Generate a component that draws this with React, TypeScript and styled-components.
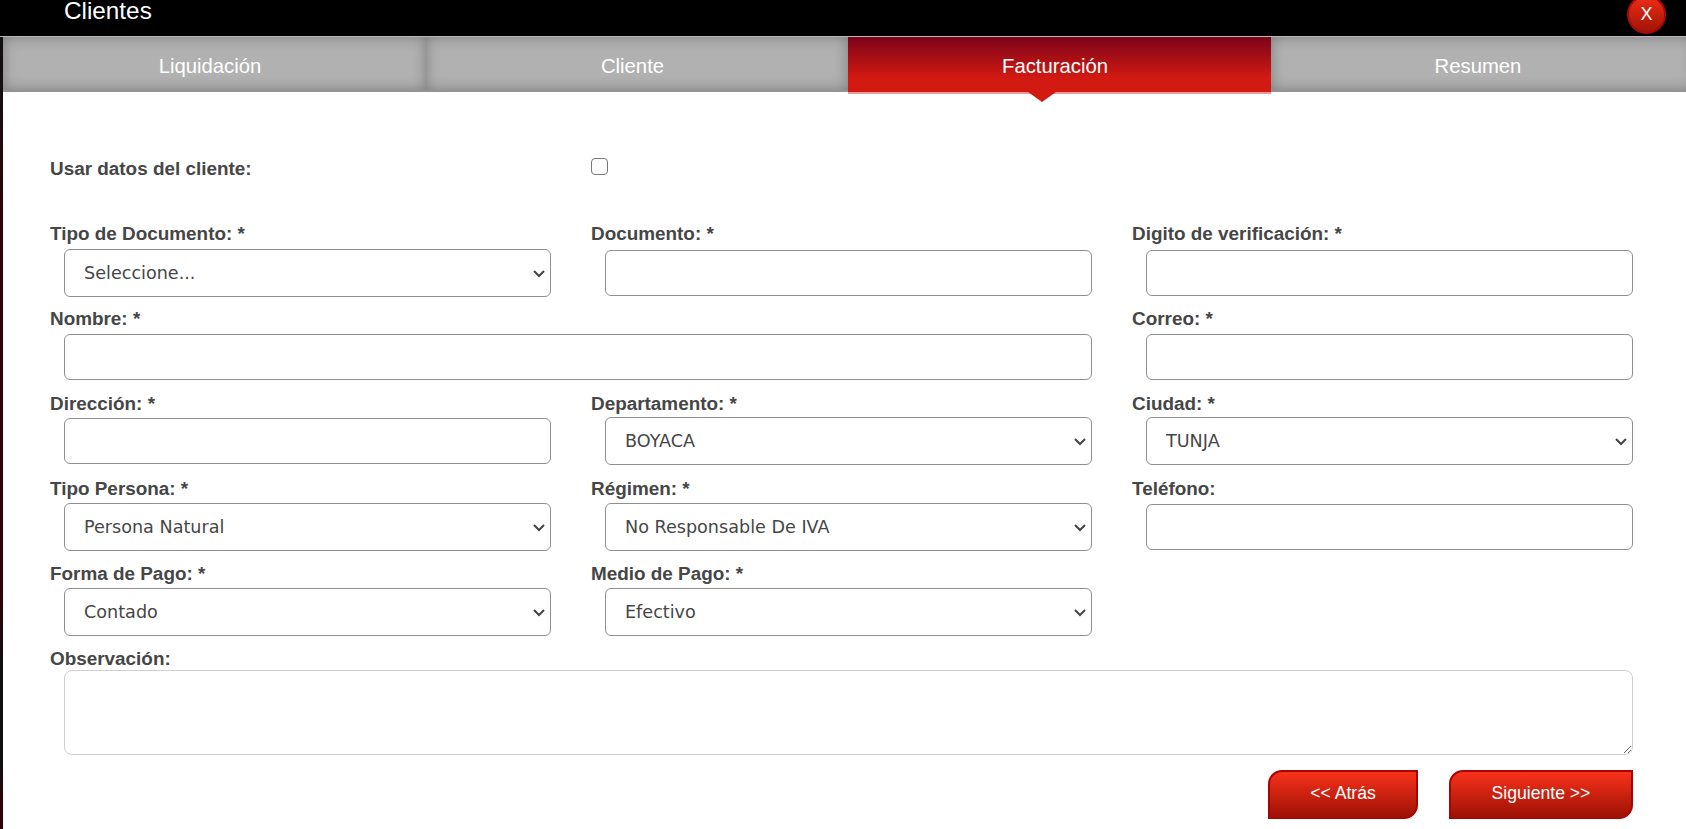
import React from 'react';
import styled, { createGlobalStyle } from 'styled-components';

const GlobalStyle = createGlobalStyle`
  html, body {
    margin: 0;
    height: 100%;
    overflow: hidden;
    background: linear-gradient(#141012 0, #141012 90px, #2c040a 200px, #2c040a 600px, #0e1010 660px, #0e1010 760px, #2c040a 800px);
    font-family: "Liberation Sans", Arial, sans-serif;
  }
`;

const Screen = styled.div`
  width: 1686px;
  height: 829px;
  overflow: hidden;
  display: flex;
  flex-direction: column;
`;

const Header = styled.header`
  height: 36px;
  background: #000;
  border-bottom: 1px solid #b8b8b8;
  display: flex;
  justify-content: space-between;
  padding: 0 20px 0 64px;
  flex: none;
`;

const Title = styled.h2`
  margin: 0;
  font-size: 24.3px;
  line-height: 22px;
  font-weight: 400;
  color: #fff;
`;

const CloseButton = styled.button`
  width: 39px;
  height: 39px;
  margin-top: -5px;
  padding: 0;
  border: 2px solid #a80a0a;
  border-radius: 50%;
  background: linear-gradient(#ee2c16, #a01406);
  color: #fff;
  font: 400 18px "Liberation Sans", Arial, sans-serif;
  position: relative;
  z-index: 2;
`;

const Body = styled.div`
  flex: 1;
  margin-left: 3px;
  background: #fff;
  display: flex;
  flex-direction: column;
`;

const Tabs = styled.nav`
  display: grid;
  grid-template-columns: 423px 422px 423px 423px;
  height: 55px;
  flex: none;
`;

const Tab = styled.div<{ $active?: boolean }>`
  position: relative;
  display: flex;
  align-items: center;
  justify-content: center;
  box-sizing: border-box;
  height: ${(p) => (p.$active ? '57px' : '55px')};
  padding: ${(p) => (p.$active ? '6px 9px 2px 0' : '6px 9px 0 0')};
  font-size: 20.3px;
  color: #fff;
  background: ${(p) => (p.$active ? 'linear-gradient(#7c0419 0%, #d21a12 75%, #d21a12 100%)' : '#b1b1b1')};
  box-shadow: ${(p) => (p.$active ? 'none' : 'inset 0 0 14px rgba(0, 0, 0, 0.3)')};
  border-bottom: 2px solid ${(p) => (p.$active ? '#eb9a96' : '#939393')};

  ${(p) =>
    p.$active &&
    `&::after {
      content: '';
      position: absolute;
      left: 180px;
      bottom: -10px;
      border-left: 14px solid transparent;
      border-right: 14px solid transparent;
      border-top: 10px solid #d21a12;
    }`}
`;

const Form = styled.form`
  flex: 1;
  padding: 66px 0 0 47px;
  color: #464646;
`;

const CheckRow = styled.div`
  display: grid;
  grid-template-columns: 541px 1fr;
  height: 63px;
`;

const CheckLabel = styled.label`
  font-size: 18.9px;
  font-weight: 700;
  line-height: 22px;
`;

const Check = styled.input`
  width: 17px;
  height: 17px;
  margin: 0;
  appearance: none;
  border: 1.5px solid #777;
  border-radius: 4px;
  background: #fff;
`;

const Grid = styled.div`
  display: grid;
  grid-template-columns: repeat(3, 541px);
`;

const Field = styled.div<{ $span?: number }>`
  grid-column: span ${(p) => p.$span ?? 1};
  display: flex;
  flex-direction: column;
  height: 85px;
`;

const Label = styled.label<{ $tight?: number }>`
  font-size: 18.9px;
  font-weight: 700;
  line-height: 25px;
  height: ${(p) => 28 - (p.$tight ?? 0)}px;
`;

const NotesLabel = styled(Label)`
  display: block;
  height: 24px;
`;

const TextInput = styled.input<{ $wide?: boolean }>`
  box-sizing: border-box;
  margin: 1px 0 0 14px;
  width: ${(p) => (p.$wide ? '1028px' : '487px')};
  height: 46px;
  border: 1px solid #8f8f8f;
  border-radius: 6px;
  background: #fff;
  outline: none;
`;

const SelectBox = styled.div`
  position: relative;
  margin-left: 14px;
  width: 487px;
  height: 48px;
`;

const Select = styled.select`
  box-sizing: border-box;
  display: block;
  width: 100%;
  height: 100%;
  padding: 0 30px 0 19px;
  appearance: none;
  border: 1px solid #8f8f8f;
  border-radius: 6px;
  background: #fff;
  color: #464646;
  font: 400 17.6px "DejaVu Sans", sans-serif;
`;

const Chevron = styled.svg`
  position: absolute;
  right: 5px;
  top: 20px;
  width: 14px;
  height: 9px;
  pointer-events: none;
`;

const Notes = styled.textarea`
  box-sizing: border-box;
  display: block;
  margin: 0 0 0 14px;
  width: 1569px;
  height: 85px;
  border: 1px solid #cfcfcf;
  border-radius: 8px;
  outline: none;
`;

const Actions = styled.div`
  display: flex;
  justify-content: flex-end;
  gap: 31px;
  width: 1583px;
  margin-top: 15px;
`;

const ActionButton = styled.button<{ $w: number }>`
  width: ${(p) => p.$w}px;
  height: 49px;
  padding: 0 0 3px;
  border: 2px solid #a80404;
  border-bottom-width: 1px;
  border-radius: 14px 0 14px 0;
  background: linear-gradient(#f8321a, #9c1004);
  color: #fff;
  font: 400 17.6px "Liberation Sans", Arial, sans-serif;
`;

const tabs = ['Liquidación', 'Cliente', 'Facturación', 'Resumen'];

function SelectField({ label, value, tight }: { label: string; value: string; tight?: number }) {
  return (
    <Field>
      <Label $tight={tight}>{label}</Label>
      <SelectBox>
        <Select defaultValue={value}>
          <option>{value}</option>
        </Select>
        <Chevron viewBox="0 0 14 9" fill="none" stroke="#444" strokeWidth="2">
          <path d="M2 2l5 5 5-5" />
        </Chevron>
      </SelectBox>
    </Field>
  );
}

function InputField({ label, wide, tight }: { label: string; wide?: boolean; tight?: number }) {
  return (
    <Field $span={wide ? 2 : 1}>
      <Label $tight={tight}>{label}</Label>
      <TextInput $wide={wide} />
    </Field>
  );
}

export default function App() {
  return (
    <Screen>
      <GlobalStyle />
      <Header>
        <Title>Clientes</Title>
        <CloseButton type="button">X</CloseButton>
      </Header>
      <Body>
        <Tabs>
          {tabs.map((t) => (
            <Tab key={t} $active={t === 'Facturación'}>
              {t}
            </Tab>
          ))}
        </Tabs>
        <Form>
          <CheckRow>
            <CheckLabel>Usar datos del cliente:</CheckLabel>
            <Check type="checkbox" />
          </CheckRow>
          <Grid>
            <SelectField label="Tipo de Documento: *" value="Seleccione..." />
            <InputField label="Documento: *" />
            <InputField label="Digito de verificación: *" />
            <InputField label="Nombre: *" wide tight={1} />
            <InputField label="Correo: *" tight={1} />
            <InputField label="Dirección: *" tight={2} />
            <SelectField label="Departamento: *" value="BOYACA" tight={2} />
            <SelectField label="Ciudad: *" value="TUNJA" tight={2} />
            <SelectField label="Tipo Persona: *" value="Persona Natural" tight={1} />
            <SelectField label="Régimen: *" value="No Responsable De IVA" tight={1} />
            <InputField label="Teléfono:" tight={1} />
            <SelectField label="Forma de Pago: *" value="Contado" tight={1} />
            <SelectField label="Medio de Pago: *" value="Efectivo" tight={1} />
          </Grid>
          <NotesLabel>Observación:</NotesLabel>
          <Notes />
          <Actions>
            <ActionButton type="button" $w={150}>
              &lt;&lt; Atrás
            </ActionButton>
            <ActionButton type="button" $w={184}>
              Siguiente &gt;&gt;
            </ActionButton>
          </Actions>
        </Form>
      </Body>
    </Screen>
  );
}
